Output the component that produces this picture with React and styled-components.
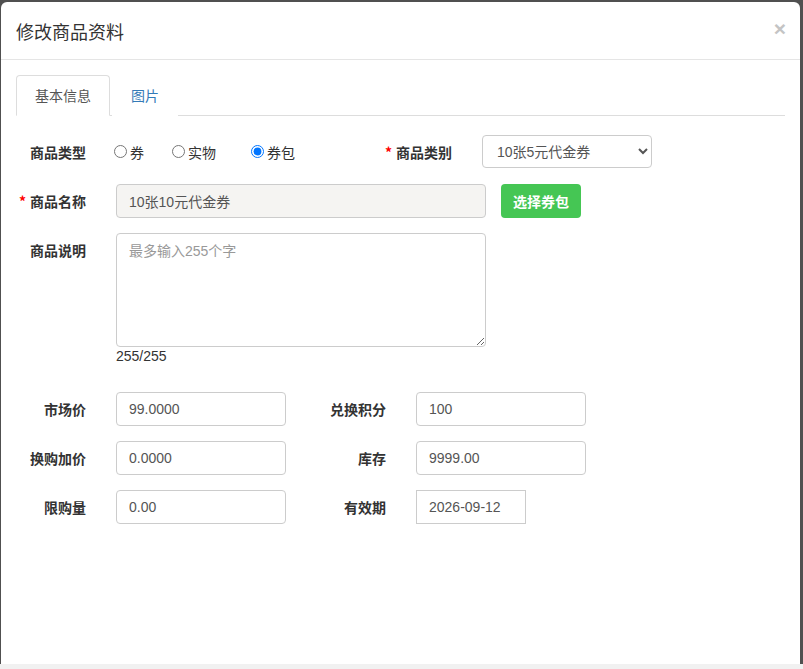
import React from "react";
import styled, { createGlobalStyle } from "styled-components";

const GlobalStyle = createGlobalStyle`
  html, body {
    margin: 0;
    padding: 0;
    height: 100%;
  }
  body {
    font-family: "Liberation Sans", "Noto Sans CJK SC", sans-serif;
    font-size: 14px;
    color: #333;
  }
  #root {
    height: 100%;
  }
`;

const Page = styled.div`
  height: 100%;
  display: flex;
  flex-direction: column;
`;

const Backdrop = styled.div`
  flex: 1;
  display: flex;
  background: #505050;
  padding: 2px 3px 0 1px;
`;

const Modal = styled.div`
  flex: 1;
  background: #fff;
  border-radius: 6px 6px 0 0;
  display: flex;
  flex-direction: column;
`;

const Footer = styled.div`
  height: 5px;
  background: #f1f1f1;
`;

const Header = styled.div`
  height: 57px;
  border-bottom: 1px solid #e5e5e5;
  display: flex;
  align-items: center;
  justify-content: space-between;
  padding: 0 14px 0 15px;
`;

const Title = styled.h4`
  margin: 0;
  font-size: 18px;
  font-weight: normal;
  color: #333;
  font-family: "Noto Sans CJK SC", sans-serif;
`;

const Close = styled.button`
  border: 0;
  background: none;
  padding: 0;
  font-size: 21px;
  font-weight: bold;
  color: #c4c4c4;
  line-height: 1;
  margin-top: -4px;
  font-family: "Liberation Sans", sans-serif;
`;

const Body = styled.div`
  padding: 15px 15px 0 15px;
`;

const Tabs = styled.ul`
  list-style: none;
  margin: 0;
  padding: 0;
  display: flex;
  border-bottom: 1px solid #ddd;
`;

const Tab = styled.li`
  margin-right: 2px;
  margin-bottom: -1px;
  padding: 9px 18px 10px;
  line-height: 20px;
  font-size: 14px;
  font-family: "Noto Sans CJK SC", sans-serif;
  border: 1px solid ${(p) => (p.$active ? "#ddd" : "transparent")};
  border-bottom-color: ${(p) => (p.$active ? "#fff" : "transparent")};
  border-radius: 4px 4px 0 0;
  background: #fff;
  color: ${(p) => (p.$active ? "#555" : "#337ab7")};
`;

const Form = styled.div`
  padding-top: 19px;
`;

const Row = styled.div`
  display: flex;
  align-items: ${(p) => (p.$top ? "flex-start" : "center")};
  margin-bottom: ${(p) => p.$mb || 15}px;
`;

const Label = styled.label`
  width: ${(p) => p.$w || 70}px;
  text-align: right;
  font-weight: bold;
  color: #333;
  font-size: 14px;
  font-family: "Noto Sans CJK SC", sans-serif;
  flex-shrink: 0;
  margin-right: 30px;
  white-space: nowrap;
  padding-top: ${(p) => (p.$top ? "7px" : "0")};
`;

const Star = styled.span`
  color: #f00;
  margin-right: 4px;
`;

const RadioGroup = styled.div`
  width: ${(p) => p.$w}px;
  display: flex;
  align-items: center;
`;

const RadioItem = styled.label`
  display: flex;
  align-items: center;
  width: ${(p) => (p.$w ? `${p.$w}px` : "auto")};
  margin-left: -2px;
  font-family: "Noto Sans CJK SC", sans-serif;
  font-size: 14px;
  color: #333;

  input {
    margin: 0 3px 0 0;
    width: 13px;
    height: 13px;
  }
`;

const Select = styled.select`
  width: 170px;
  height: 33px;
  border: 1px solid #ccc;
  border-radius: 4px;
  padding: 0 10px;
  font-size: 14px;
  color: #555;
  background: #fff;
  font-family: "Liberation Sans", "Noto Sans CJK SC", sans-serif;
`;

const Input = styled.input`
  box-sizing: border-box;
  width: ${(p) => p.$w || 170}px;
  height: 34px;
  padding: 0 12px;
  border: 1px solid #ccc;
  border-radius: ${(p) => (p.$square ? "0" : "4px")};
  font-size: 14px;
  color: #555;
  background: ${(p) => (p.readOnly ? "#f5f4f2" : "#fff")};
  font-family: "Liberation Sans", "Noto Sans CJK SC", sans-serif;
  outline: none;
`;

const PickButton = styled.button`
  margin-left: 15px;
  height: 34px;
  padding: 0 12px;
  border: 0;
  border-radius: 4px;
  background: #45c654;
  color: #fff;
  font-size: 14px;
  font-weight: bold;
  font-family: "Noto Sans CJK SC", sans-serif;
`;

const TextBlock = styled.div`
  display: flex;
  flex-direction: column;
`;

const TextArea = styled.textarea`
  box-sizing: border-box;
  width: 370px;
  height: 114px;
  border: 1px solid #ccc;
  border-radius: 4px;
  padding: 6px 12px;
  font-size: 14px;
  color: #555;
  font-family: "Liberation Sans", "Noto Sans CJK SC", sans-serif;
  outline: none;

  &::placeholder {
    color: #999;
  }
`;

const Counter = styled.div`
  margin-top: 1px;
  font-size: 14px;
  color: #333;
  line-height: 17px;
`;

const Field = styled.div`
  display: flex;
  align-items: center;
  margin-right: ${(p) => p.$mr || 0}px;
`;

const pairs = [
  ["市场价", "99.0000", "兑换积分", "100"],
  ["换购加价", "0.0000", "库存", "9999.00"],
  ["限购量", "0.00", "有效期", "2026-09-12"],
];

export default function App() {
  return (
    <Page>
      <GlobalStyle />
      <Backdrop>
        <Modal>
          <Header>
            <Title>修改商品资料</Title>
            <Close>×</Close>
          </Header>
          <Body>
            <Tabs>
              <Tab $active>基本信息</Tab>
              <Tab>图片</Tab>
            </Tabs>
            <Form>
              <Row $mb={16}>
                <Label>商品类型</Label>
                <RadioGroup $w={256}>
                  <RadioItem $w={60}>
                    <input type="radio" name="t" />券
                  </RadioItem>
                  <RadioItem $w={81}>
                    <input type="radio" name="t" />实物
                  </RadioItem>
                  <RadioItem>
                    <input type="radio" name="t" defaultChecked />券包
                  </RadioItem>
                </RadioGroup>
                <Label $w={80}>
                  <Star>*</Star>商品类别
                </Label>
                <Select defaultValue="a">
                  <option value="a">10张5元代金券</option>
                </Select>
              </Row>
              <Row>
                <Label>
                  <Star>*</Star>商品名称
                </Label>
                <Input $w={370} readOnly defaultValue="10张10元代金券" />
                <PickButton>选择券包</PickButton>
              </Row>
              <Row $top $mb={27}>
                <Label $top>商品说明</Label>
                <TextBlock>
                  <TextArea placeholder="最多输入255个字" />
                  <Counter>255/255</Counter>
                </TextBlock>
              </Row>
              {pairs.map(([l1, v1, l2, v2]) => (
                <Row key={l1}>
                  <Field $mr={30}>
                    <Label>{l1}</Label>
                    <Input defaultValue={v1} />
                  </Field>
                  <Field>
                    <Label>{l2}</Label>
                    {l2 === "有效期" ? (
                      <Input $w={110} $square defaultValue={v2} />
                    ) : (
                      <Input defaultValue={v2} />
                    )}
                  </Field>
                </Row>
              ))}
            </Form>
          </Body>
        </Modal>
      </Backdrop>
      <Footer />
    </Page>
  );
}
